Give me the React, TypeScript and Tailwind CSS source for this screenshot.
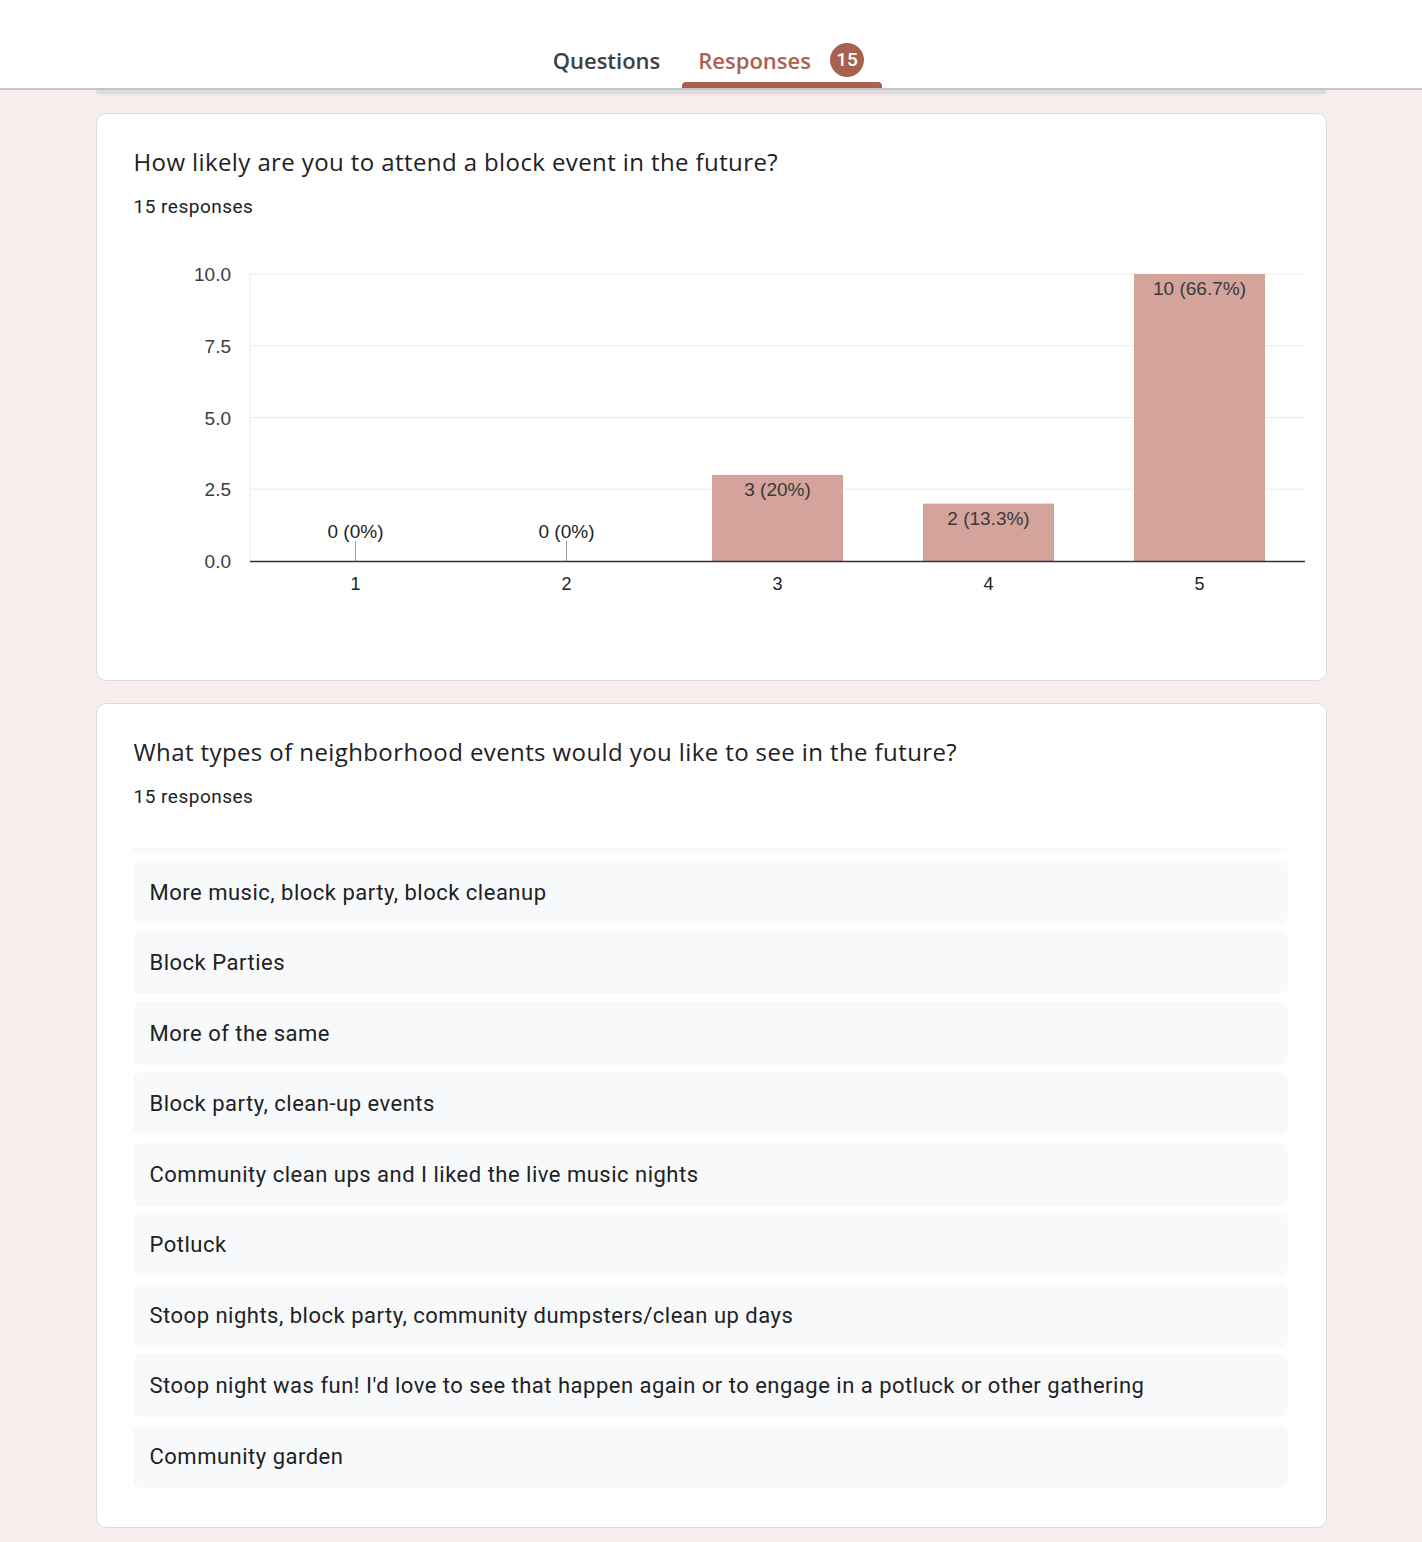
import React from 'react'

const responses: string[] = [
  'More music, block party, block cleanup',
  'Block Parties',
  'More of the same',
  'Block party, clean-up events',
  'Community clean ups and I liked the live music nights',
  'Potluck',
  'Stoop nights, block party, community dumpsters/clean up days',
  "Stoop night was fun! I'd love to see that happen again or to engage in a potluck or other gathering",
  'Community garden',
]

const bars = [
  { label: '1', value: 0, text: '0 (0%)' },
  { label: '2', value: 0, text: '0 (0%)' },
  { label: '3', value: 3, text: '3 (20%)' },
  { label: '4', value: 2, text: '2 (13.3%)' },
  { label: '5', value: 10, text: '10 (66.7%)' },
]

const BarChart: React.FC = () => {
  const left = 153
  const right = 1208
  const top = 34
  const base = 321
  const unit = (base - top) / 10
  const step = (right - left) / 5
  const ticks = [10, 7.5, 5, 2.5, 0]

  return (
    <svg width="1229" height="420" className="block" style={{ fontFamily: '"Liberation Sans", Arial, sans-serif' }}>
      {ticks.map((t) => {
        const y = base - t * unit
        return (
          <g key={t}>
            {t !== 0 && <line x1={left} x2={right} y1={y} y2={y} stroke="#ebebeb" strokeWidth="1" />}
            <text x={134} y={y + 7} textAnchor="end" fontSize="19" fill="#3c3c3c">
              {t.toFixed(1)}
            </text>
          </g>
        )
      })}
      <line x1={left} x2={left} y1={top} y2={base} stroke="#ebebeb" strokeWidth="1" />
      {bars.map((b, i) => {
        const cx = left + step * i + step / 2
        const h = b.value * unit
        return (
          <g key={b.label}>
            {b.value > 0 ? (
              <>
                <rect x={cx - 65.5} y={base - h} width="131" height={h} fill="#d3a39c" />
                <text x={cx} y={base - h + 21} textAnchor="middle" fontSize="19" fill="#3a3a3a">
                  {b.text}
                </text>
              </>
            ) : (
              <>
                <line x1={cx} x2={cx} y1={base - 20} y2={base} stroke="#9e9e9e" strokeWidth="1" />
                <text x={cx} y={base - 23} textAnchor="middle" fontSize="19" fill="#222">
                  {b.text}
                </text>
              </>
            )}
            <text x={cx} y={base + 29} textAnchor="middle" fontSize="18" fill="#222">
              {b.label}
            </text>
          </g>
        )
      })}
      <line x1={left} x2={right} y1={base + 0.5} y2={base + 0.5} stroke="#333" strokeWidth="1.5" />
    </svg>
  )
}

const CardHeader: React.FC<{ title: string }> = ({ title }) => (
  <div className="px-[37px] pt-[32px]">
    <div className="text-[24px] leading-[32px] tracking-[0.4px] text-[#202124]" style={{ fontFamily: '"Open Sans", sans-serif' }}>
      {title}
    </div>
    <div className="mt-[17px] text-[19px] leading-[24px] tracking-[0.5px] text-[#202124]" style={{ fontFamily: 'Roboto, sans-serif' }}>
      15 responses
    </div>
  </div>
)

const App: React.FC = () => {
  return (
    <div className="min-h-[1542px] bg-[#f7eeed]" style={{ fontFamily: 'Roboto, sans-serif' }}>
      <div className="h-[90px] bg-white border-b-2 border-[#c8c7cc] flex justify-center items-end">
        <div className="flex items-end gap-[22px] ml-[13px]">
          <div className="h-[88px] flex items-center pt-[32px] text-[22px] font-semibold text-[#3c4043]" style={{ fontFamily: '"Open Sans", sans-serif' }}>
            Questions
          </div>
          <div className="relative h-[88px] w-[200px] flex items-center pl-[16px] pt-[32px] gap-[19px]">
            <span className="text-[22px] font-semibold text-[#ab6152]" style={{ fontFamily: '"Open Sans", sans-serif' }}>
              Responses
            </span>
            <span className="w-[34px] h-[34px] rounded-full bg-[#a8614f] text-white text-[19px] font-medium flex items-center justify-center">
              15
            </span>
            <span className="absolute bottom-0 left-0 right-0 h-[6px] rounded-t-[4px] bg-[#ab6152]" />
          </div>
        </div>
      </div>

      <div className="mx-auto w-[1231px] h-[3px] rounded-b-lg bg-[#dcdbe0] shadow-sm" />

      <div className="mx-auto w-[1231px] flex flex-col gap-[22px] pt-[20px] pb-[15px]">
        <div className="bg-white rounded-[10px] border border-[#dadce0]">
          <CardHeader title="How likely are you to attend a block event in the future?" />
          <div className="mt-[21px] pb-[20px]">
            <BarChart />
          </div>
        </div>

        <div className="bg-white rounded-[10px] border border-[#dadce0] pb-[39px]">
          <CardHeader title="What types of neighborhood events would you like to see in the future?" />
          <div className="ml-[36px] mr-[38px] mt-[39px] flex flex-col gap-[7.5px]">
            <div className="h-[5px] rounded-b-lg bg-[#f8f9fa]" />
            {responses.map((r) => (
              <div key={r} className="h-[63px] rounded-lg bg-[#f8f9fa] flex items-center px-[17px] text-[22px] tracking-[0.5px] text-[#202124]">
                {r}
              </div>
            ))}
          </div>
        </div>
      </div>
    </div>
  )
}

export default App
